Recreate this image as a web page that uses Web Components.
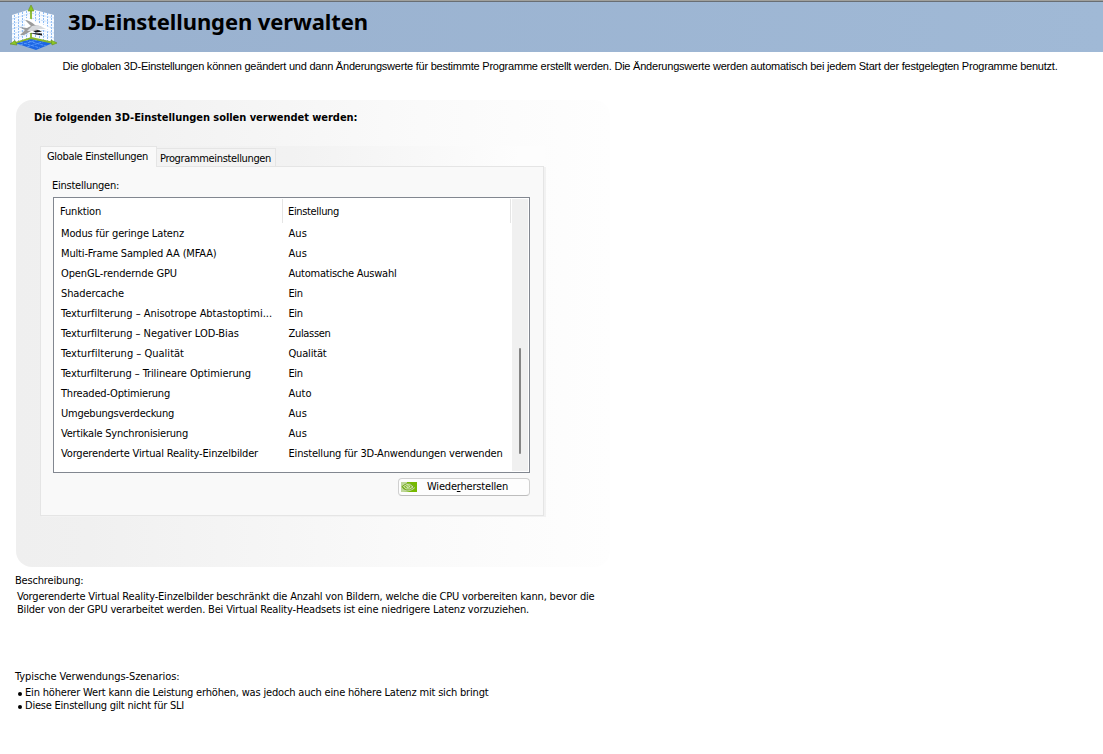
<!DOCTYPE html>
<html lang="de">
<head>
<meta charset="utf-8">
<title>3D-Einstellungen verwalten</title>
<style>
  body {
    margin: 0;
    background: #fff;
    color: #000;
    font: 11px/13px "DejaVu Sans Condensed", "DejaVu Sans", sans-serif;
    font-stretch: condensed;
  }
</style>
</head>
<body>
<settings-page></settings-page>

<script>
class BaseComponent extends HTMLElement {
  constructor() {
    super();
    this.attachShadow({ mode: 'open' });
  }

  connectedCallback() {
    this.render();
  }

  render(template) {
    this.shadowRoot.innerHTML = template;
  }
}

// One line of text, tracked to fill the given width.
class TextLine extends BaseComponent {
  render() {
    super.render(`
      <style>
        :host {
          display: block;
          width: max-content;
          white-space: nowrap;
        }
      </style>
      <slot></slot>
    `);

    const width = parseFloat(this.getAttribute('width'));
    const nodes = this.shadowRoot.querySelector('slot').assignedNodes({ flatten: true });
    const length = nodes.map(node => node.textContent).join('').length;

    if (width && length) {
      const natural = this.getBoundingClientRect().width;
      this.style.letterSpacing = `${(width - natural) / length}px`;
    }
  }
}

class AxesIcon extends BaseComponent {
  render() {
    super.render(`
      <style>
        :host { display: block; width: 50px; height: 48px; }
        svg { display: block; }
      </style>
      <svg width="50" height="48" viewBox="9 4 50 48">
        <path d="M12 15 31 9V38L12 44Z" fill="#f8fbff"/>
        <path d="M31 9 54 15V43L31 38Z" fill="#f8fbff"/>
        <path d="M14.500 15V43M18.500 13V42M22.500 12V41M26.500 11V39M35.500 11V39M39.500 12V40M43.500 12V41M47.500 13V42M51.500 15V43"
          stroke="#8dbcf5" stroke-dasharray="2 1" fill="none"/>
        <path d="M12 19 31 13 54 18M12 24 31 18 54 23M12 29 31 23 54 28M12 34 31 28 54 33M12 39 31 33 54 38"
          stroke="#b4d3f9" stroke-width=".8" stroke-dasharray="2 1" fill="none"/>
        <path d="M15 43 31 38 53 43 36 50Z" fill="#1d66e4"/>
        <path d="M20 42 40 48M25 40 46 46M20 45 37 40M27 47 45 41" stroke="#5798fa" stroke-dasharray="3 1" fill="none"/>
        <path d="M31 9V38L13 43.500M31 38 54 43" stroke="#86b52a" stroke-width="1.800" fill="none"/>
        <path d="M31 5 34 11H28ZM10 44 15 40.500 17 45ZM57 43 51 40 52 45Z" fill="#8bc823" stroke="#668b1a" stroke-width=".6"/>
        <path d="M25 18Q32 18 38 23Q45 24 52 30Q45 29 39 30L31 33L25 32Z" fill="#fff"/>
        <path d="M25 20Q29 20 35 25L42 27L39 29L31 31L24 35L20 35L25 30L19 27L27 28L31 26Z" fill="#9b9b9b"/>
        <path d="M32 26 38 25 46 29 38 29 32 31 27 31Z" fill="#d8dadd"/>
        <path d="M33 31 38 30 42 31.500 36 32.500ZM30 33 42 33.500 42 35.500 36 34.500Z" fill="#151515"/>
      </svg>
    `);
  }
}

class EyeIcon extends BaseComponent {
  render() {
    super.render(`
      <style>
        :host { display: block; width: 16px; height: 10px; }
        svg { display: block; }
      </style>
      <svg width="16" height="10" viewBox="0 0 16 10">
        <path d="M0 0H16V10H0Z" fill="#bfd79a"/>
        <path d="M6 0H16V10H2Q10 10 14 6Q11 1 6 1Z" fill="#76b900"/>
        <path d="M1 4.500Q5 .5 9.500 2Q12 3 13 5Q10 8.500 6 8Q2 7.500 1 4.500Z" fill="#83b92b" stroke="#679d13" stroke-width=".7"/>
        <path d="M2.500 4.500Q6 1.200 9.500 3L12 5Q8.500 8 5 6.800Z" fill="none" stroke="#d9e8c2" stroke-width=".9"/>
        <path d="M5 5Q7 2.800 9 4.500Q7.500 6.200 6 5.500" fill="none" stroke="#e9f3d9" stroke-width=".8"/>
      </svg>
    `);
  }
}

class PageHeader extends BaseComponent {
  render() {
    super.render(`
      <style>
        :host {
          display: flex;
          box-sizing: border-box;
          height: 52px;
          padding: 2px 0 0 9px;
          gap: 9px;
          border-top: 1px solid #a0a09c;
          background: linear-gradient(#696e73 1px, transparent 1px), linear-gradient(90deg, #99b1cf, #a0b9d6);
          font: bold 22px/27px "Noto Sans", sans-serif;
        }
        axes-icon { margin-top: 1px; }
        text-line { margin-top: 5px; }
      </style>
      <axes-icon></axes-icon>
      <text-line width="300"><slot></slot></text-line>
    `);
  }
}

class TabBar extends BaseComponent {
  render() {
    super.render(`
      <style>
        :host {
          display: flex;
          align-items: flex-end;
          width: 505px;
          height: 20px;
          background: linear-gradient(90deg, #f0f0f0, #f2f2f2 50%, #fdfdfd 95%);
        }
        div { box-sizing: border-box; border: 1px solid #e5e5e5; border-bottom: 0; }
        .active {
          width: 117px;
          height: 21px;
          margin-bottom: -1px;
          padding: 3px 0 0 6px;
          background: #f9f9f9;
          z-index: 1;
        }
        .other {
          width: 119px;
          height: 18px;
          padding: 3px 0 0 3px;
          border-left: 0;
          background: #f3f3f3;
        }
      </style>
      <div class="active"><text-line width="101">Globale Einstellungen</text-line></div>
      <div class="other"><text-line width="111">Programmeinstellungen</text-line></div>
    `);
  }
}

class SettingRow extends BaseComponent {
  render() {
    super.render(`
      <style>
        :host {
          display: grid;
          grid-template-columns: 227.500px 1fr;
          height: 20px;
          line-height: 20px;
          padding-left: 7px;
        }
      </style>
      <text-line width="${this.getAttribute('name-width')}">${this.getAttribute('name')}</text-line>
      <text-line width="${this.getAttribute('value-width')}">${this.getAttribute('value')}</text-line>
    `);
  }
}

class SettingsTable extends BaseComponent {
  render() {
    super.render(`
      <style>
        :host {
          display: flex;
          box-sizing: border-box;
          width: 477px;
          height: 276px;
          padding: 1px;
          border: 1px solid #828790;
          background: #fff;
        }
        .rows { width: 458px; margin-left: -1px; }
        .head { display: flex; height: 24px; margin-bottom: 1px; line-height: 26px; }
        .head div { box-sizing: border-box; border-right: 1px solid #e5e5e5; }
        .name { width: 229px; padding-left: 6px; }
        .value { width: 228px; padding-left: 5px; }
        .scroll { width: 16px; background: #f0f0f0; }
        .thumb { width: 2px; height: 106px; margin: 149px 0 0 7px; border-radius: 1px; background: #858585; }
      </style>
      <div class="rows">
        <div class="head">
          <div class="name"><text-line width="41">Funktion</text-line></div>
          <div class="value"><text-line width="51">Einstellung</text-line></div>
        </div>
        <slot></slot>
      </div>
      <div class="scroll"><div class="thumb"></div></div>
    `);
  }
}

class RestoreButton extends BaseComponent {
  render() {
    super.render(`
      <style>
        :host {
          display: flex;
          box-sizing: border-box;
          align-items: center;
          width: 132px;
          height: 18px;
          gap: 10px;
          padding-left: 2px;
          border: 1px solid #d0d0d0;
          border-bottom-color: #bdbdbd;
          border-radius: 4px;
          background: #fdfdfd;
        }
        text-line { margin-top: -1px; }
        u { text-underline-offset: 1px; }
      </style>
      <eye-icon></eye-icon>
      <text-line width="81">Wiede<u>r</u>herstellen</text-line>
    `);
  }
}

class SettingsGroup extends BaseComponent {
  render() {
    super.render(`
      <style>
        :host {
          display: block;
          box-sizing: border-box;
          width: 594px;
          height: 467px;
          padding: 11px 0 0 24px;
          border-radius: 16px;
          background: linear-gradient(90deg, #efefef, #f0f0f0 12%, #fafafa 68%, #fefefe);
        }
        .title { margin: 0 0 22px -6px; font-weight: bold; }
        .panel {
          box-sizing: border-box;
          width: 504px;
          height: 350px;
          padding: 12px 0 0 12px;
          border: 1px solid #e5e5e5;
          box-shadow: 2px 1px 0 #f2f2f2;
          background: #f9f9f9;
        }
        .label { margin: 0 0 5px -1px; }
        restore-button { margin: 5px 0 0 345px; }
      </style>
      <text-line class="title" width="323.500">Die folgenden 3D-Einstellungen sollen verwendet werden:</text-line>
      <tab-bar></tab-bar>
      <div class="panel">
        <text-line class="label" width="67">Einstellungen:</text-line>
        <settings-table><slot></slot></settings-table>
        <restore-button></restore-button>
      </div>
    `);
  }
}

class BulletItem extends BaseComponent {
  render() {
    super.render(`
      <style>
        :host { display: flex; align-items: center; gap: 3px; height: 13px; }
        i { width: 4px; height: 4px; margin-top: 2px; border-radius: 50%; background: #000; }
      </style>
      <i></i>
      <text-line width="${this.getAttribute('width')}"><slot></slot></text-line>
    `);
  }
}

class SettingsPage extends BaseComponent {
  render() {
    const rows = [
      ['Modus für geringe Latenz', 123, 'Aus', 18.5],
      ['Multi-Frame Sampled AA (MFAA)', 155.5, 'Aus', 18.5],
      ['OpenGL-rendernde GPU', 116, 'Automatische Auswahl', 108],
      ['Shadercache', 63, 'Ein', 14],
      ['Texturfilterung – Anisotrope Abtastoptimi...', 211, 'Ein', 14],
      ['Texturfilterung – Negativer LOD-Bias', 178, 'Zulassen', 42],
      ['Texturfilterung – Qualität', 123, 'Qualität', 38],
      ['Texturfilterung – Trilineare Optimierung', 190, 'Ein', 14],
      ['Threaded-Optimierung', 109, 'Auto', 23],
      ['Umgebungsverdeckung', 113, 'Aus', 18.5],
      ['Vertikale Synchronisierung', 127, 'Aus', 18.5],
      ['Vorgerenderte Virtual Reality-Einzelbilder', 197, 'Einstellung für 3D-Anwendungen verwenden', 214]
    ];

    super.render(`
      <style>
        :host { display: block; height: 754px; overflow: hidden; }
        .intro {
          margin: 8px 0 0 62.500px;
          font-family: "Liberation Sans", Arial, sans-serif;
        }
        settings-group { margin: 27px 0 0 16px; }
        .notes { padding: 7px 0 0 15px; }
        .description { margin: 3px 0 0 2px; height: 80px; }
        .scenarios { margin: 3px 0 0 3px; }
      </style>
      <page-header>3D-Einstellungen verwalten</page-header>
      <text-line class="intro" width="995">Die globalen 3D-Einstellungen können geändert und dann Änderungswerte für bestimmte Programme erstellt werden. Die Änderungswerte werden automatisch bei jedem Start der festgelegten Programme benutzt.</text-line>
      <settings-group>
        ${rows.map(([name, nameWidth, value, valueWidth]) => `
          <setting-row name="${name}" name-width="${nameWidth}" value="${value}" value-width="${valueWidth}"></setting-row>
        `).join('')}
      </settings-group>
      <div class="notes">
        <text-line width="68.500">Beschreibung:</text-line>
        <div class="description">
          <text-line width="577.500">Vorgerenderte Virtual Reality-Einzelbilder beschränkt die Anzahl von Bildern, welche die CPU vorbereiten kann, bevor die</text-line>
          <text-line width="512">Bilder von der GPU verarbeitet werden. Bei Virtual Reality-Headsets ist eine niedrigere Latenz vorzuziehen.</text-line>
        </div>
        <text-line width="164.500">Typische Verwendungs-Szenarios:</text-line>
        <div class="scenarios">
          <bullet-item width="463.500">Ein höherer Wert kann die Leistung erhöhen, was jedoch auch eine höhere Latenz mit sich bringt</bullet-item>
          <bullet-item width="159">Diese Einstellung gilt nicht für SLI</bullet-item>
        </div>
      </div>
    `);
  }
}

window.customElements.define('text-line', TextLine);
window.customElements.define('axes-icon', AxesIcon);
window.customElements.define('eye-icon', EyeIcon);
window.customElements.define('page-header', PageHeader);
window.customElements.define('tab-bar', TabBar);
window.customElements.define('setting-row', SettingRow);
window.customElements.define('settings-table', SettingsTable);
window.customElements.define('restore-button', RestoreButton);
window.customElements.define('settings-group', SettingsGroup);
window.customElements.define('bullet-item', BulletItem);
window.customElements.define('settings-page', SettingsPage);
</script>
</body>
</html>
